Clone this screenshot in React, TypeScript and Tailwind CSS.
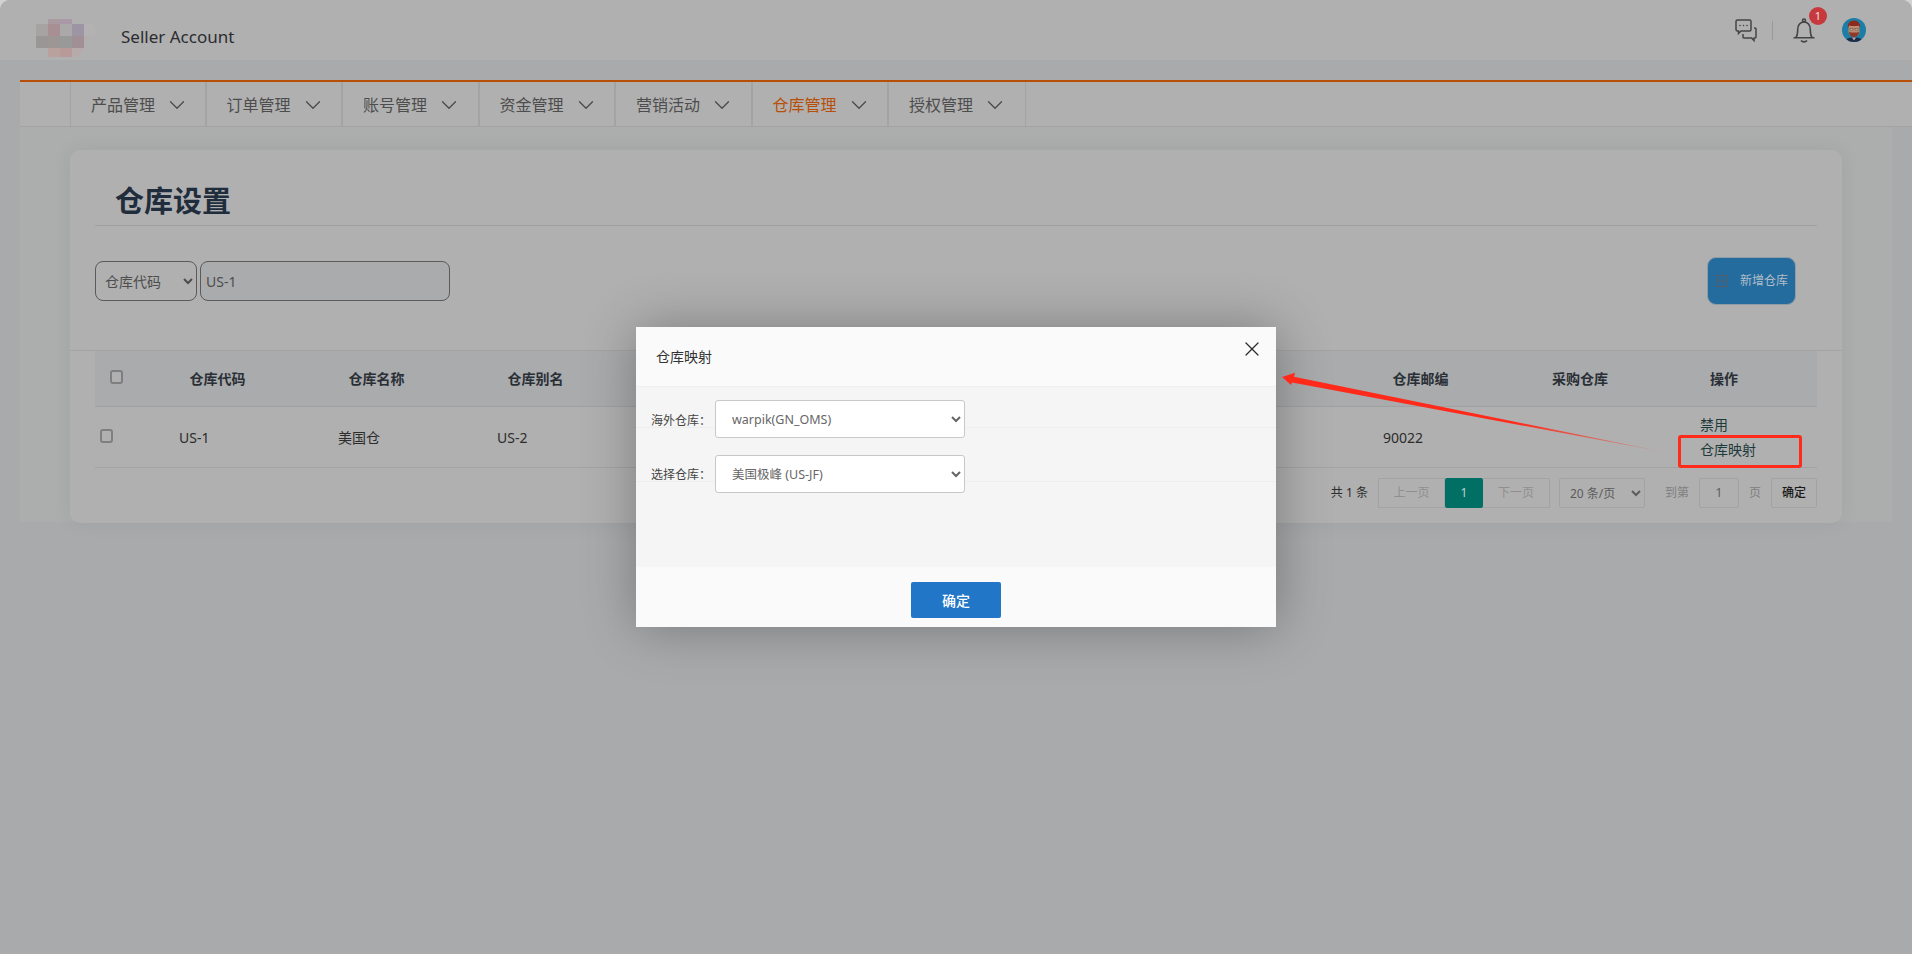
import { ChevronDown, X } from 'lucide-react';

const navItems = ['产品管理', '订单管理', '账号管理', '资金管理', '营销活动', '仓库管理', '授权管理'];
const rowGrid = 'grid grid-cols-[43px_159px_159px_159px_726px_159px_160px_128px_29px]';

function Logo() {
  return (
    <svg width="60" height="38" viewBox="0 0 60 38" className="shrink-0">
      <rect x="12" y="0" width="12" height="5" fill="#a99a9f" />
      <rect x="24" y="0" width="12" height="5" fill="#a998a8" />
      <rect x="0" y="5" width="12" height="12" fill="#a8a3a3" />
      <rect x="12" y="5" width="12" height="12" fill="#a78f94" />
      <rect x="24" y="5" width="12" height="12" fill="#aaa8a8" />
      <rect x="36" y="5" width="12" height="12" fill="#9e95a4" />
      <path d="M48 5h9l3 5v4l-3 3h-9z" fill="#b3b1b1" />
      <rect x="0" y="17" width="12" height="12" fill="#9a9695" />
      <rect x="12" y="17" width="12" height="12" fill="#9c9694" />
      <rect x="24" y="17" width="12" height="12" fill="#989a99" />
      <rect x="36" y="17" width="12" height="12" fill="#a18f96" />
      <path d="M48 17h6l-6 12z" fill="#b3adae" />
      <rect x="12" y="29" width="12" height="9" fill="#b9a19d" />
      <rect x="24" y="29" width="12" height="9" fill="#b99a9a" />
      <path d="M36 29h12l-6 8-6 1z" fill="#b6aaab" />
    </svg>
  );
}

function ChatIcon() {
  return (
    <svg width="22" height="23" viewBox="0 0 22 23" fill="none" stroke="#444444" strokeWidth="1.5" className="shrink-0">
      <path d="M2.5 1h12a1.5 1.5 0 0 1 1.5 1.5v8a1.5 1.5 0 0 1-1.5 1.5H6l-2.5 2.5V12h-1A1.5 1.5 0 0 1 1 10.500v-8A1.500 1.500 0 0 1 2.500 1z" />
      <path d="M19 9h1a1 1 0 0 1 1 1v8a1 1 0 0 1-1 1h-1v2.500L16.500 19H9a1 1 0 0 1-1-1v-3" />
      <circle cx="5" cy="6.500" r="0.8" fill="#444444" stroke="none" />
      <circle cx="8.500" cy="6.500" r="0.8" fill="#444444" stroke="none" />
      <circle cx="12" cy="6.500" r="0.8" fill="#444444" stroke="none" />
    </svg>
  );
}

function BellIcon() {
  return (
    <svg width="22" height="25" viewBox="0 0 22 25" fill="none" stroke="#444444" strokeWidth="1.6" className="shrink-0">
      <circle cx="11" cy="2.500" r="1.500" />
      <path d="M3 19.500c1.800-2.500 1.700-5.500 1.700-8C4.700 7 7.400 4 11 4s6.300 3 6.300 7.500c0 2.500-.1 5.500 1.700 8" />
      <path d="M0.500 19.800h21" />
      <path d="M8 22.500c1.500 1.800 4.500 1.800 6 0" />
    </svg>
  );
}

function Avatar() {
  return (
    <svg width="24" height="24" viewBox="0 0 24 24" className="shrink-0">
      <clipPath id="avatar-clip">
        <circle cx="12" cy="12" r="12" />
      </clipPath>
      <g clipPath="url(#avatar-clip)">
        <rect width="24" height="24" fill="#1b7ea6" />
        <path d="M3 24c.5-3.500 4-4.500 9-4.500s8.500 1 9 4.500z" fill="#1f2a44" />
        <path d="M10 19.500h4l-2 3z" fill="#b9b2ac" />
        <path d="M6.500 9c0-3.500 2.500-5 5.500-5s5.500 1.500 5.500 5v5c0 2.500-2.500 4.500-5.500 4.500S6.500 16.500 6.500 14z" fill="#bd8c6e" />
        <path d="M6 10.500C5 5.500 8 2.500 12 2.500s7 3 6 8l-1-3c-2 .7-8 .7-10 0z" fill="#8c2a1e" />
        <path d="M7 13.500l1.500 1h7l1.500-1c.3 3-2 5.500-5 5.500s-5.300-2.500-5-5.500z" fill="#8f3a28" />
        <rect x="8" y="10.500" width="3" height="1.500" fill="#ddc9b8" stroke="#3a2a25" strokeWidth="0.4" />
        <rect x="13" y="10.500" width="3" height="1.500" fill="#ddc9b8" stroke="#3a2a25" strokeWidth="0.4" />
      </g>
    </svg>
  );
}

function Checkbox() {
  return (
    <input
      type="checkbox"
      className="appearance-none block w-[13px] h-[14px] bg-[#b0b0b0] border-2 border-[#7f7f7f] rounded-[3px]"
    />
  );
}

function PageBox({ children, className }: { children: React.ReactNode; className: string }) {
  return <div className={`h-[30px] flex items-center justify-center border border-[#a3a3a3] ${className}`}>{children}</div>;
}

function MappingDialog() {
  return (
    <div className="absolute left-[636px] top-[327px] w-[640px] h-[300px] flex flex-col bg-[#f5f5f5] shadow-[1px_1px_50px_rgba(0,0,0,0.3)]">
      <div className="h-[60px] shrink-0 bg-[#fafafa] border-b border-[#eeeeee] flex items-start justify-between pl-[20px] pr-[12px]">
        <span className="mt-[20px] text-[14px] leading-5 text-[#333333]">仓库映射</span>
        <X className="mt-[10px] w-[24px] h-[24px] text-[#2b2b2b]" strokeWidth={1.2} />
      </div>
      <div className="flex-1">
        <div className="h-[41px] border-b border-[#eeeeee] flex items-start pl-[15px]">
          <label className="w-[64px] mt-[25px] text-[12px] leading-[18px] text-[#444444]">海外仓库：</label>
          <select className="mt-[13px] w-[250px] h-[38px] bg-white border border-[#c8c8c8] rounded-[3px] pl-[12px] text-[12.500px] text-[#666666]">
            <option>warpik(GN_OMS)</option>
          </select>
        </div>
        <div className="h-[54px] border-b border-[#eeeeee] flex items-start pl-[15px]">
          <label className="w-[64px] mt-[38px] text-[12px] leading-[18px] text-[#444444]">选择仓库：</label>
          <select className="mt-[27px] w-[250px] h-[38px] bg-white border border-[#c8c8c8] rounded-[3px] pl-[12px] text-[12.500px] text-[#666666]">
            <option>美国极峰 (US-JF)</option>
          </select>
        </div>
      </div>
      <div className="h-[60px] shrink-0 bg-[#fafafa] flex items-start justify-center pt-[15px]">
        <button className="w-[90px] h-[36px] bg-[#2176c7] rounded-[2px] text-[14px] text-white font-medium">确定</button>
      </div>
    </div>
  );
}

function Annotations() {
  return (
    <>
      <svg width="400" height="100" viewBox="0 0 400 100" className="absolute left-[1276px] top-[365px]">
        <defs>
          <linearGradient id="arrow-fill" x1="0" y1="0" x2="1" y2="0">
            <stop offset="0.6" stopColor="#ff2a1a" />
            <stop offset="1" stopColor="#ff2a1a" stopOpacity="0.2" />
          </linearGradient>
        </defs>
        <polygon points="6,12 19,7.700 18,11.800 388,87 16,17.500 15,20" fill="url(#arrow-fill)" />
      </svg>
      <div className="absolute left-[1678px] top-[435px] w-[124px] h-[33px] border-[3px] border-[#ff2a1a] rounded-[3px]" />
    </>
  );
}

export default function App() {
  return (
    <div className="relative w-[1912px] h-[954px] overflow-hidden bg-[#d2d2d2] font-['Noto_Sans','Noto_Sans_CJK_SC',sans-serif]">
      <div className="h-full rounded-t-[10px] overflow-hidden bg-[#a9aaac] flex flex-col">
        <header className="h-[60px] shrink-0 bg-[#b0b0b0] flex items-center justify-between pl-[36px] pr-[46px]">
          <div className="flex items-center mt-[15px]">
            <Logo />
            <span className="ml-[25px] -mt-[2px] text-[17px] text-[#2c2c30]">Seller Account</span>
          </div>
          <div className="flex items-center">
            <ChatIcon />
            <div className="ml-[15px] w-px h-[19px] bg-[#9a9a9a]" />
            <div className="relative ml-[20px]">
              <BellIcon />
              <span className="absolute left-[16px] top-[-11px] w-[18px] h-[18px] rounded-full bg-[#c8393e] text-[11px] leading-[18px] text-center text-[#e8e0e0]">1</span>
            </div>
            <div className="ml-[27px]">
              <Avatar />
            </div>
          </div>
        </header>

        <div className="mt-[20px] ml-[20px] border-t-2 border-[#b84f08] h-[47px] shrink-0 bg-[#b0b0b0] border-b border-b-[#a3a3a3] flex pl-[50px]">
          {navItems.map((item, i) => (
            <div
              key={item}
              className={`w-[136.500px] h-full flex items-center pl-[20px] border-[#a3a3a3] ${i === 0 ? 'border-l' : ''} ${i === navItems.length - 1 ? 'border-r' : 'border-r-2'}`}
            >
              <span className={`mt-[2px] text-[16px] ${item === '仓库管理' ? 'text-[#b84f08]' : 'text-[#4d4d4d]'}`}>{item}</span>
              <ChevronDown className="ml-[9px] mt-[2px] w-[26px] h-[26px] text-[#4a4a4a]" strokeWidth={1.2} />
            </div>
          ))}
        </div>

        <div className="ml-[20px] mr-[20px] h-[395px] shrink-0 bg-[#acaeae] pt-[23px] pl-[50px] pr-[50px]">
          <div className="h-[373px] rounded-[10px] bg-[#b0b0b0] shadow-[0_0_20px_rgba(0,0,0,0.06)]">
            <div className="h-[201px] border-b border-[#a3a3a3] px-[25px]">
              <div className="h-[76px] border-b border-[#a0a0a0] flex items-end pl-[20px] pb-[2px]">
                <h1 className="text-[29px] leading-[44px] font-bold text-[#1f2d3d]">仓库设置</h1>
              </div>
              <div className="mt-[35px] h-[40px] flex items-center justify-between pr-[21px]">
                <div className="flex items-center gap-[3px]">
                  <select className="w-[102px] h-[40px] bg-transparent border border-[#5a5a5a] rounded-[8px] pl-[5px] text-[14px] text-[#4d4d4d]">
                    <option>仓库代码</option>
                  </select>
                  <input
                    readOnly
                    value="US-1"
                    className="w-[250px] h-[40px] bg-[#aaabad] border border-[#5a5a5a] rounded-[8px] pl-[5px] text-[14px] text-[#4d4d4d]"
                  />
                </div>
                <button className="w-[89px] h-[48px] -my-[4px] bg-[#246b9e] border border-[#8f9da6] rounded-[9px] flex items-center pl-[8px] text-[12px] text-[#b0bec8]">
                  <svg width="12" height="12" viewBox="0 0 12 12" fill="none" stroke="#565f66" strokeWidth="1" className="shrink-0">
                    <rect x="0.500" y="0.500" width="11" height="11" />
                    <path d="M6 3v6M3 6h6" />
                  </svg>
                  <span className="ml-[12px] whitespace-nowrap">新增仓库</span>
                </button>
              </div>
            </div>

            <div className="px-[25px]">
              <div className={`${rowGrid} h-[56px] items-center bg-[#a9abad] border-b border-[#a0a0a0] text-[14px] font-bold text-[#2a2f36] text-center`}>
                <div className="pl-[15px] -mt-[3px]">
                  <Checkbox />
                </div>
                <div>仓库代码</div>
                <div>仓库名称</div>
                <div>仓库别名</div>
                <div />
                <div>仓库邮编</div>
                <div>采购仓库</div>
                <div>操作</div>
                <div />
              </div>
              <div className={`${rowGrid} h-[61px] items-center border-b border-[#a3a3a3] text-[14px] text-[#2c2c2c]`}>
                <div className="pl-[5px] -mt-[3px]">
                  <Checkbox />
                </div>
                <div className="pl-[41px]">US-1</div>
                <div className="pl-[41px]">美国仓</div>
                <div className="pl-[41px]">US-2</div>
                <div />
                <div className="pl-[42px]">90022</div>
                <div />
                <div className="pl-[40px] flex flex-col text-[#1f3a3a] leading-[25px] whitespace-nowrap">
                  <span>禁用</span>
                  <span>仓库映射</span>
                </div>
                <div />
              </div>
              <div className="mt-[10px] flex items-center justify-end text-[12px] text-[#7f7f7f]">
                <span className="mr-[10px] text-[#2c2c2c]">共 1 条</span>
                <PageBox className="w-[67px] text-[#8f8f8f]">上一页</PageBox>
                <div className="w-[38px] h-[30px] flex items-center justify-center bg-[#016f63] rounded-[2px] text-[#c0d0cc]">1</div>
                <PageBox className="w-[67px] text-[#8f8f8f] border-l-0">下一页</PageBox>
                <select className="ml-[9px] w-[86px] h-[30px] bg-transparent border border-[#a3a3a3] rounded-[2px] pl-[6px] text-[#5c5c5c]">
                  <option>20 条/页</option>
                </select>
                <span className="ml-[20px]">到第</span>
                <PageBox className="ml-[10px] w-[40px] rounded-[2px] text-[#5c5c5c]">1</PageBox>
                <span className="ml-[10px]">页</span>
                <PageBox className="ml-[10px] w-[46px] rounded-[2px] font-medium text-[#1a1a1a]">确定</PageBox>
              </div>
            </div>
          </div>
        </div>
      </div>

      <MappingDialog />
      <Annotations />
    </div>
  );
}
